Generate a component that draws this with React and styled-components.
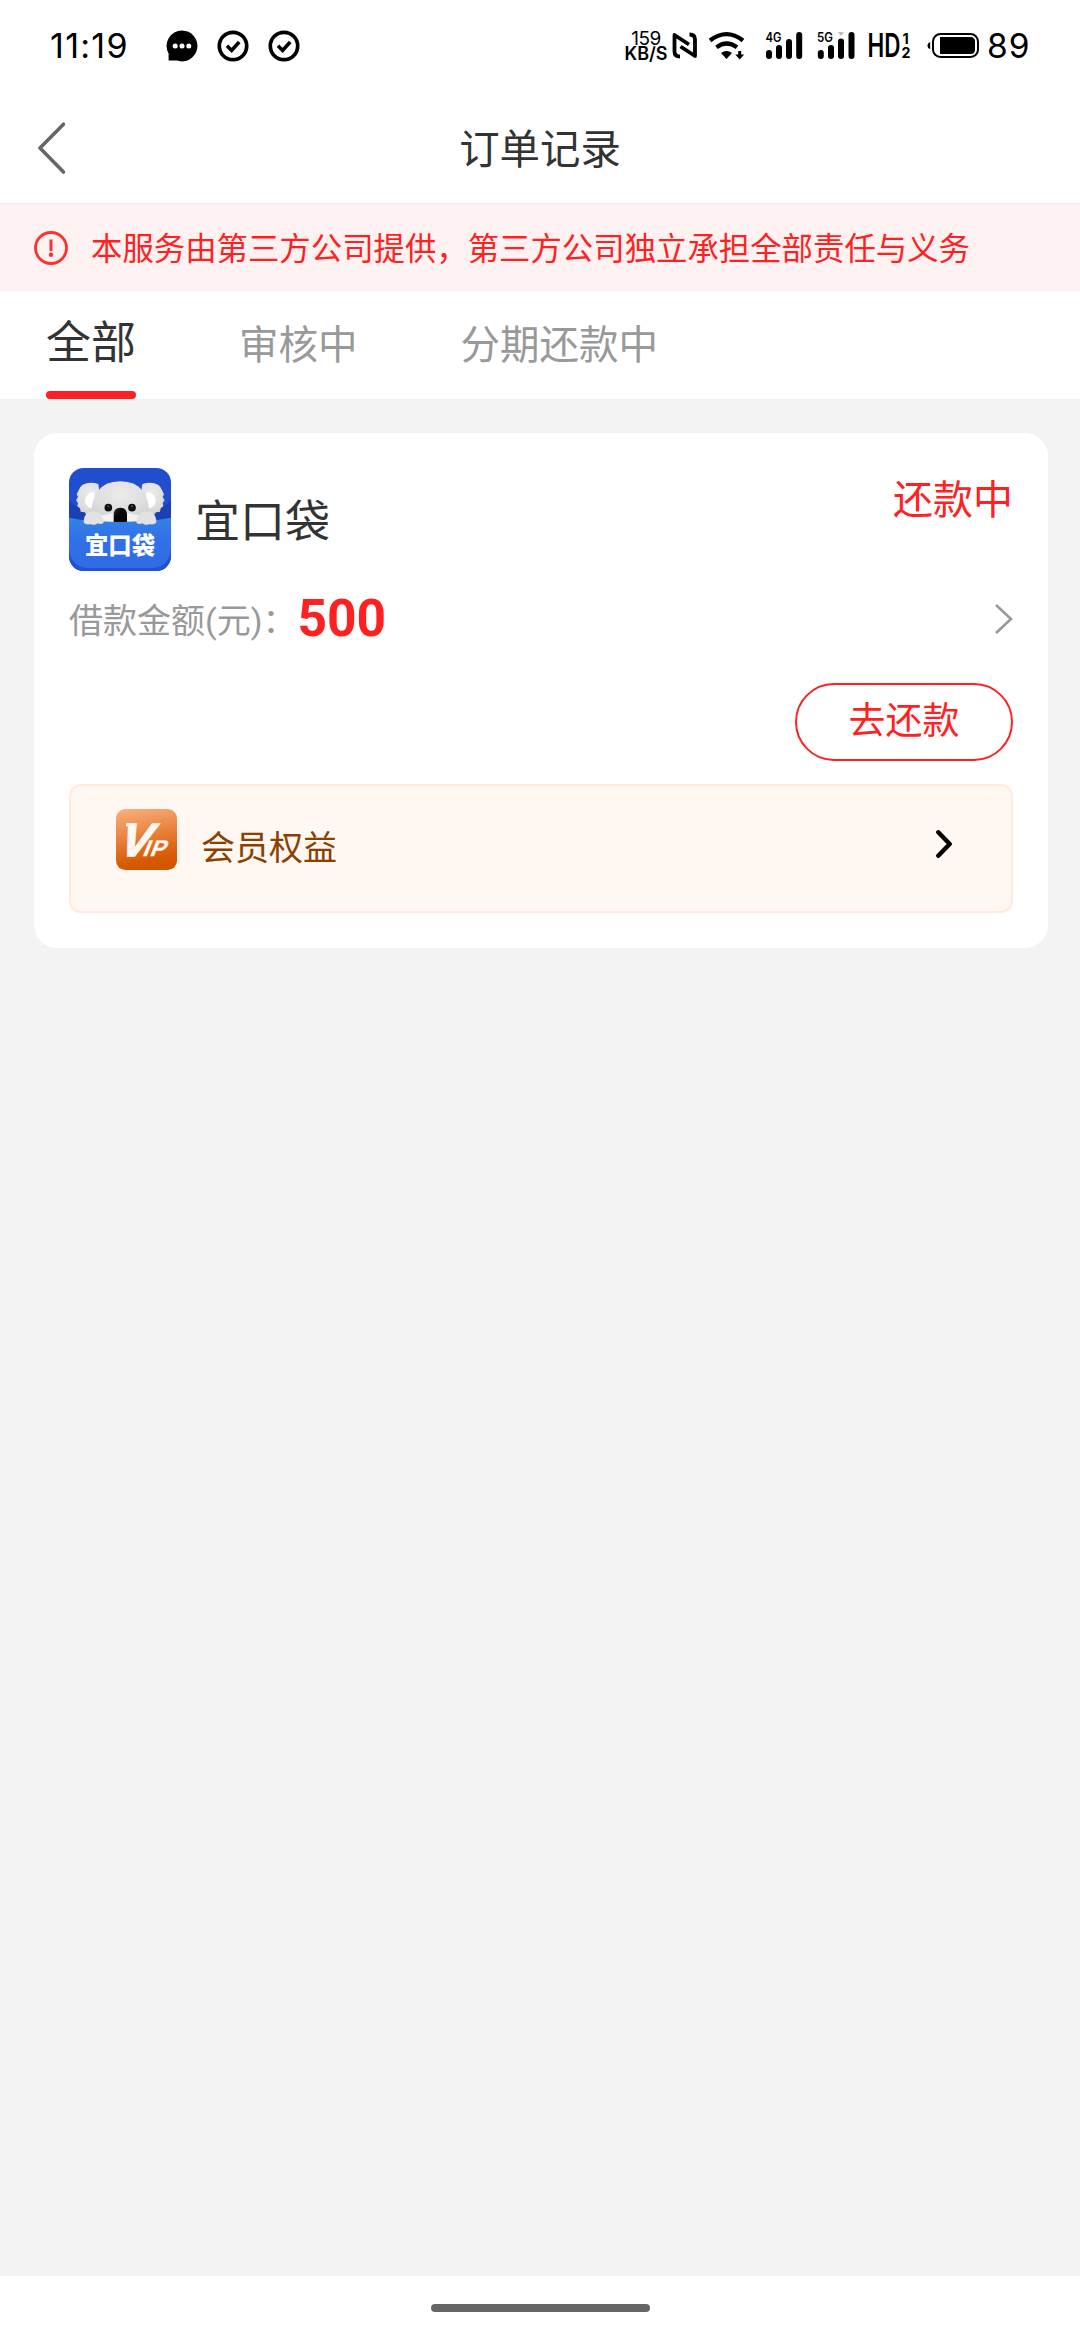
import styled, { createGlobalStyle } from "styled-components"

const tabs = ["全部", "审核中", "分期还款中"]

export default function App() {
    return (
        <SCPage>
            <GlobalStyle />
            <StatusBar />
            <SCHeader>
                <SCBack viewBox="0 0 27 52">
                    <path d="M25.5 2.2L2 26l23.500 24" />
                </SCBack>
                <h1>订单记录</h1>
            </SCHeader>
            <SCNotice>
                <AlertIcon />
                <p>本服务由第三方公司提供，第三方公司独立承担全部责任与义务</p>
            </SCNotice>
            <SCTabs>
                {tabs.map((tab, i) =>
                    <SCTab key={tab} $active={i === 0}>{tab}</SCTab>
                )}
            </SCTabs>
            <SCContent>
                <OrderCard />
            </SCContent>
            <SCNavBar>
                <div />
            </SCNavBar>
        </SCPage>
    )
}

function OrderCard() {
    return (
        <SCCard>
            <SCCardHead>
                <KoalaLogo />
                <h2>宜口袋</h2>
                <span>还款中</span>
            </SCCardHead>
            <SCAmount>
                <p>借款金额(元)：</p>
                <strong>500</strong>
                <svg width="18" height="30" viewBox="0 0 18 30">
                    <path d="M1 1l15 14L1 29" fill="none" stroke="#999" strokeWidth="2.6" />
                </svg>
            </SCAmount>
            <SCActions>
                <SCPayButton>去还款</SCPayButton>
            </SCActions>
            <SCVip>
                <VipIcon />
                <p>会员权益</p>
                <svg width="16" height="28" viewBox="0 0 16 28">
                    <path d="M2.300 2.300L13.700 14L2.300 25.700" fill="none" stroke="#000" strokeWidth="4.400" strokeLinecap="round" strokeLinejoin="round" />
                </svg>
            </SCVip>
        </SCCard>
    )
}

function StatusBar() {
    return (
        <SCStatusBar>
            <SCClock>11:19</SCClock>
            <SCNotifications>
                <svg width="32" height="32" viewBox="0 0 32 32">
                    <path d="M16 .4a15.500 15.500 0 1 1-5 30.200H2.600v-7A15.500 15.500 0 0 1 16 .4z" />
                    <circle cx="9.200" cy="16" r="2.500" fill="#fff" />
                    <circle cx="16" cy="16" r="2.500" fill="#fff" />
                    <circle cx="22.800" cy="16" r="2.500" fill="#fff" />
                </svg>
                <CheckIcon />
                <CheckIcon />
            </SCNotifications>
            <SCSpeed>
                <span>159</span>
                <b>KB/S</b>
            </SCSpeed>
            <SCSystem>
                <svg width="408" height="60" viewBox="672 16 408 60">
                    {/* nfc */}
                    <g fill="none" stroke="#000" strokeWidth="3.800" strokeLinejoin="round">
                        <path d="M680 56.500q-5.500 0-5.500-5V35l14.500 9.500" />
                        <path d="M689.500 34.500q5.500 0 5.500 5V56L680.500 46.500" />
                    </g>
                    {/* wifi */}
                    <g fill="none" stroke="#000" strokeWidth="4.200">
                        <path d="M710 40.500q16.500-12.800 33 0" />
                        <path d="M716.500 47.300q10-7.600 20.500 0" />
                    </g>
                    <path d="M721 53q5.500-4 11 0l-5.500 6z" />
                    <path d="M738.200 51h3v3.500h3l-4.500 5-4.500-5h3z" />
                    {/* 4G */}
                    <text x="765.500" y="42" fontSize="13" fontWeight="600" textLength="16" lengthAdjust="spacingAndGlyphs">4G</text>
                    <rect x="766" y="50" width="6" height="9" rx="3" />
                    <rect x="776" y="45" width="6" height="14" rx="3" />
                    <rect x="786" y="39" width="6" height="20" rx="3" />
                    <rect x="796.200" y="32" width="6" height="27" rx="3" />
                    {/* 5G */}
                    <text x="817" y="42" fontSize="13" fontWeight="600" textLength="16" lengthAdjust="spacingAndGlyphs">5G</text>
                    <rect x="817.800" y="50" width="6" height="9" rx="3" />
                    <rect x="828" y="45" width="6" height="14" rx="3" />
                    <rect x="838" y="38.500" width="6" height="20.500" rx="3" />
                    <rect x="848.500" y="32" width="6" height="27" rx="3" />
                    <path d="M838 32h6l-3 4z" fill="#bbb" />
                    {/* volte */}
                    <text x="867.500" y="57" fontSize="32" fontWeight="600" textLength="33" lengthAdjust="spacingAndGlyphs">HD</text>
                    <text x="902.500" y="44.300" fontSize="14.500" fontWeight="700">1</text>
                    <text x="901.500" y="57.500" fontSize="14.500" fontWeight="700" textLength="9" lengthAdjust="spacingAndGlyphs">2</text>
                    {/* battery */}
                    <path d="M930.200 42v7.200q-2.800-1-2.800-3.600t2.800-3.600z" />
                    <rect x="933" y="34" width="45" height="23" rx="7.500" fill="none" stroke="#000" strokeWidth="2" />
                    <path d="M940 37h30.500q4.500 0 4.500 4.500v8q0 4.500-4.500 4.500H940z" />
                    <text x="987" y="58" fontSize="33.500" textLength="42.500">89</text>
                </svg>
            </SCSystem>
        </SCStatusBar>
    )
}

function CheckIcon() {
    return (
        <svg width="32" height="32" viewBox="0 0 32 32" fill="none" stroke="#000">
            <circle cx="16" cy="16" r="13.700" strokeWidth="3.700" />
            <path d="M10 15.800l4.600 4.600 7.600-8.400" strokeWidth="3.600" />
        </svg>
    )
}

function AlertIcon() {
    return (
        <svg width="34" height="34" viewBox="0 0 34 34">
            <circle cx="17" cy="17" r="15.500" fill="none" stroke="#ff3030" strokeWidth="2.800" />
            <path d="M17 8.500v11.500" stroke="#ff3030" strokeWidth="3" />
            <circle cx="17" cy="23.800" r="2.200" fill="#ff3030" />
        </svg>
    )
}

function KoalaLogo() {
    return (
        <svg width="102" height="103" viewBox="0 0 306 309">
            <defs>
                <clipPath id="logo-clip"><rect width="306" height="309" rx="44" /></clipPath>
                <linearGradient id="pocket" x1="0" y1="0" x2="0" y2="1">
                    <stop offset="0" stopColor="#3581e4" />
                    <stop offset=".45" stopColor="#3070e8" />
                    <stop offset="1" stopColor="#2f6ce6" />
                </linearGradient>
                <radialGradient id="fur" cx=".5" cy=".3" r=".75">
                    <stop offset="0" stopColor="#ebebeb" />
                    <stop offset=".6" stopColor="#dedede" />
                    <stop offset="1" stopColor="#cacbce" />
                </radialGradient>
                <linearGradient id="nose" x1="0" y1="0" x2="1" y2="1">
                    <stop offset="0" stopColor="#333" />
                    <stop offset=".4" stopColor="#050505" />
                </linearGradient>
            </defs>
            <g clipPath="url(#logo-clip)">
                <rect width="306" height="309" fill="#214dcf" />
                <path d="M0 100L30 120h246l30-20v60H0z" fill="#1b3fb4" />
                {/* ears */}
                <path d="M88 48q-26-9-47 2-10 7-12 17l-6 12 4 8-6 10 6 8-2 10 8 6 2 10 12 2 6 8 50 4z" fill="url(#fur)" />
                <path d="M220 48q26-9 47 2 10 7 12 17l6 12-4 8 6 10-6 8 2 10-8 6-2 10-12 2-6 8-50 4z" fill="url(#fur)" />
                <path d="M76 72q-22 0-27 20-4 20 14 27l14 8z" fill="#fff" />
                <path d="M232 72q22 0 27 20 4 20-14 27l-14 8z" fill="#fff" />
                {/* head */}
                <path d="M72 165q-14-50 13-94 22-31 69-31t69 31q27 44 13 94z" fill="url(#fur)" />
                <path d="M98 142q56-16 112 0v22H98z" fill="#f2f2f2" />
                <circle cx="118" cy="119" r="11.500" fill="#111" />
                <circle cx="189" cy="119" r="11.500" fill="#111" />
                <circle cx="118" cy="115" r="3" fill="#555" />
                <circle cx="189" cy="115" r="3" fill="#555" />
                <path d="M134 164v-22q0-23 20-23t20 23v22z" fill="url(#nose)" />
                <path d="M0 149q70 14 153 13 83 0 153-13v160H0z" fill="#2450d2" />
                <path d="M0 149q70 14 153 13 83 0 153-13v91q-5 60-60 60H60q-55 0-60-60z" fill="url(#pocket)" />
                {/* paws */}
                <path d="M44 164q0-34 30-34 28 0 30 34-8 7-18 2-10 8-22 2-10 4-20-4z" fill="#e2e2e2" />
                <path d="M202 164q2-34 30-34 30 0 30 34-10 8-20 4-12 6-22-2-10 5-18-2z" fill="#e2e2e2" />
                <text x="153" y="257" textAnchor="middle" fill="#fff" fontSize="70" fontWeight="900" fontFamily='"Noto Sans CJK SC", sans-serif'>宜口袋</text>
            </g>
        </svg>
    )
}

function VipIcon() {
    return (
        <svg width="61" height="61" viewBox="0 0 183 183">
            <defs>
                <linearGradient id="vip" x1=".3" y1="0" x2=".5" y2="1">
                    <stop offset="0" stopColor="#f9ab78" />
                    <stop offset=".85" stopColor="#d65a04" />
                    <stop offset="1" stopColor="#d45500" />
                </linearGradient>
            </defs>
            <rect width="183" height="183" rx="28" fill="url(#vip)" />
            <path d="M30 43h20v9H30z" fill="#fff7f1" />
            <text transform="translate(0 140) skewX(-22)" fill="#fff7f1" stroke="#fff7f1" fontFamily='"Liberation Sans", sans-serif' fontWeight="700">
                <tspan x="-1" fontSize="139" strokeWidth="5">V</tspan>
                <tspan x="77" fontSize="68" strokeWidth="1">I</tspan>
                <tspan x="99" fontSize="68" strokeWidth="1">P</tspan>
            </text>
        </svg>
    )
}

const GlobalStyle = createGlobalStyle`
    body{
        margin: 0;
        background-color: #f3f3f3;
    }
    *{
        box-sizing: border-box;
    }
    h1, h2, p{
        margin: 0;
        font-weight: 400;
    }
    svg{
        flex-shrink: 0;
    }
`

const SCPage = styled.div`
    width: 1080px;
    height: 2340px;
    display: flex;
    flex-direction: column;
    overflow: hidden;
    color: #333;
    font-family: Roboto, 'Noto Sans CJK SC', sans-serif;
`

const SCStatusBar = styled.div`
    height: 92px;
    display: flex;
    align-items: center;
    background-color: white;
    color: black;
    font-family: Inter, sans-serif;
`

const SCClock = styled.span`
    width: 116px;
    margin-left: 50px;
    font-size: 34px;
    line-height: 40px;
    letter-spacing: 1.300px;
`

const SCNotifications = styled.div`
    display: flex;
    gap: 19px;
`

const SCSpeed = styled.div`
    width: 46px;
    margin-left: auto;
    display: flex;
    flex-direction: column;
    align-items: center;
    font-size: 19px;
    line-height: 15px;

    span{
        letter-spacing: -0.5px;
    }
    b{
        font-size: 18px;
        font-weight: 600;
    }
`

const SCSystem = styled.div`
    display: flex;
    margin-left: 3px;
`

const SCHeader = styled.div`
    height: 112px;
    padding: 0 38px;
    display: grid;
    grid-template-columns: 27px 1fr 27px;
    align-items: center;
    background-color: white;
    border-bottom: 1px solid #ececec;

    h1{
        padding-top: 6px;
        text-align: center;
        font-size: 40.400px;
        line-height: 58px;
    }
`

const SCBack = styled.svg`
    width: 27px;
    height: 52px;
    fill: none;
    stroke: #666;
    stroke-width: 3.600;
    stroke-linecap: round;
    stroke-linejoin: round;
`

const SCNotice = styled.div`
    height: 87px;
    padding: 0 34px;
    display: flex;
    align-items: center;
    gap: 23px;
    background-color: #fef1f1;

    p{
        padding-top: 4px;
        color: #ff2121;
        font-size: 31.400px;
        line-height: 46px;
        white-space: nowrap;
    }
`

const SCTabs = styled.div`
    height: 108px;
    padding-left: 46px;
    display: flex;
    align-items: stretch;
    gap: 103px;
    background-color: white;
`

const SCTab = styled.div`
    padding-top: ${({ $active }) => ($active ? "20px" : "22px")};
    color: ${({ $active }) => ($active ? "#333" : "#999")};
    font-size: ${({ $active }) => ($active ? "45px" : "39.500px")};
    line-height: 66px;

    &::after{
        content: '';
        display: ${({ $active }) => ($active ? "block" : "none")};
        height: 8px;
        margin-top: 14px;
        border-radius: 4px;
        background-color: #ff2121;
    }
`

const SCContent = styled.div`
    flex: 1;
    padding: 34px 32px 0 34px;
    background-color: #f3f3f3;
`

const SCCard = styled.div`
    height: 515px;
    padding: 35px;
    border-radius: 23px;
    background-color: white;
`

const SCCardHead = styled.div`
    height: 103px;
    display: flex;
    align-items: center;

    h2{
        margin-left: 24px;
        padding-top: 6px;
        font-size: 45px;
        line-height: 66px;
    }
    span{
        align-self: flex-start;
        margin-left: auto;
        padding-top: 4px;
        color: #ff2121;
        font-size: 40px;
        line-height: 57px;
    }
`

const SCAmount = styled.div`
    height: 72px;
    margin-top: 12px;
    display: flex;
    align-items: center;

    p{
        padding-top: 3px;
        color: #999;
        font-size: 34px;
        line-height: 50px;
    }
    strong{
        margin-left: 1px;
        color: #ff2121;
        font-size: 51.500px;
        line-height: 60px;
        font-weight: 700;
    }
    svg{
        margin-left: auto;
    }
`

const SCActions = styled.div`
    margin-top: 28px;
    display: flex;
    justify-content: flex-end;
`

const SCPayButton = styled.button`
    width: 218px;
    height: 78px;
    padding: 0 0 1px;
    border: 2px solid #ff2121;
    border-radius: 39px;
    background-color: white;
    color: #ff2121;
    font-family: inherit;
    font-size: 37px;
    line-height: 54px;
`

const SCVip = styled.div`
    height: 129px;
    margin-top: 23px;
    padding: 23px 59px 0 45px;
    display: flex;
    align-items: flex-start;
    border: 2px solid #ffeadc;
    border-radius: 12px;
    background-color: #fff7f2;

    p{
        margin: 14px auto 0 24px;
        color: #8a4000;
        font-size: 34px;
        line-height: 50px;
    }
    svg:last-child{
        margin-top: 21px;
    }
`

const SCNavBar = styled.div`
    height: 64px;
    padding-top: 28px;
    display: flex;
    justify-content: center;
    background-color: white;

    div{
        width: 219px;
        height: 8px;
        border-radius: 4px;
        background-color: #666;
    }
`
